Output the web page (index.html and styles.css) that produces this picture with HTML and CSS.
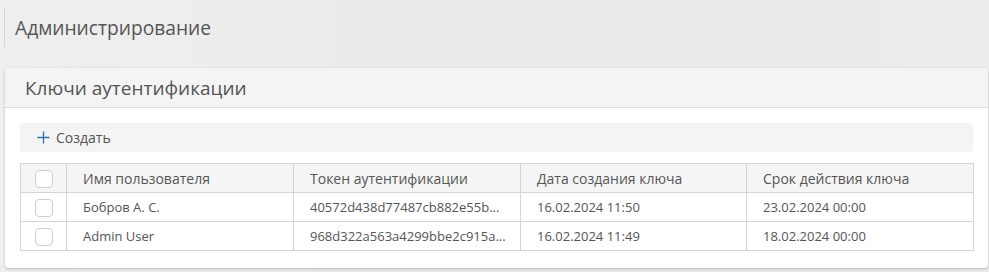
FILE: index.html
```html
<!DOCTYPE html>
<html lang="ru">
<head>
<meta charset="utf-8">
<title>Администрирование</title>
<link rel="stylesheet" href="styles.css">
</head>
<body>
<div class="page">
  <div class="page-header">
    <h1 class="page-title">Администрирование</h1>
  </div>
  <section class="card">
    <div class="card-header">
      <h2 class="card-title">Ключи аутентификации</h2>
    </div>
    <div class="card-body">
      <div class="toolbar">
        <button class="btn-create" type="button">
          <svg class="plus" width="13" height="13" viewBox="0 0 13 13"><path d="M6.5 0.5v12M0.5 6.5h12" stroke="#2f6fae" stroke-width="1.3" fill="none"/></svg>
          <span>Создать</span>
        </button>
      </div>
      <table class="grid">
        <colgroup>
          <col class="c-check"><col class="c-name"><col class="c-token"><col class="c-date"><col class="c-exp">
        </colgroup>
        <thead>
          <tr>
            <th class="check-cell"><span class="checkbox"></span></th>
            <th>Имя пользователя</th>
            <th>Токен аутентификации</th>
            <th>Дата создания ключа</th>
            <th>Срок действия ключа</th>
          </tr>
        </thead>
        <tbody>
          <tr>
            <td class="check-cell"><span class="checkbox"></span></td>
            <td>Бобров А. С.</td>
            <td>40572d438d77487cb882e55b...</td>
            <td>16.02.2024 11:50</td>
            <td>23.02.2024 00:00</td>
          </tr>
          <tr>
            <td class="check-cell"><span class="checkbox"></span></td>
            <td>Admin User</td>
            <td>968d322a563a4299bbe2c915a...</td>
            <td>16.02.2024 11:49</td>
            <td>18.02.2024 00:00</td>
          </tr>
        </tbody>
      </table>
    </div>
  </section>
</div>
</body>
</html>
```
FILE: styles.css
```css
* { box-sizing: border-box; }
html, body {
  margin: 0;
  padding: 0;
}
body {
  font-family: "Open Sans", "Noto Sans", sans-serif;
  color: #555;
  background: linear-gradient(90deg, #efefef 0%, #eaeaea 50%, #ececec 100%);
  height: 272px;
  overflow: hidden;
}
.page {
  padding: 8px 1px 0 5px;
}
.page-header {
  border-left: 1px solid #d6d6d6;
  margin-left: -1px;
  height: 39px;
  display: flex;
  align-items: center;
  padding-left: 10px;
}
.page-title {
  margin: 0;
  font-size: 19.2px;
  font-weight: 400;
  color: #555;
}
.card {
  margin-top: 21px;
  background: #fff;
  border-radius: 4px;
  box-shadow: 0 1px 3px rgba(0,0,0,0.22);
  overflow: hidden;
}
.card-header {
  height: 40px;
  background: #f4f4f4;
  border-bottom: 1px solid #dcdcdc;
  display: flex;
  align-items: center;
  padding-left: 20px;
}
.card-title {
  margin: 0;
  font-size: 19px;
  font-weight: 400;
  color: #555;
}
.card-body {
  padding: 15px 15px 17px;
}
.toolbar {
  height: 29px;
  background: #f4f4f4;
  border-radius: 4px;
  display: flex;
  align-items: center;
  padding-left: 17px;
}
.btn-create {
  display: flex;
  align-items: center;
  gap: 6px;
  border: 0;
  background: none;
  padding: 0;
  font: inherit;
  font-size: 14px;
  color: #555;
}
.plus { display: block; }
.grid {
  margin-top: 11px;
  width: 100%;
  border-collapse: collapse;
  table-layout: fixed;
  font-size: 13px;
}
.c-check { width: 46px; }
.c-name { width: 227px; }
.c-token { width: 227px; }
.c-date { width: 226px; }
.c-exp { width: 227px; }
.grid th, .grid td {
  border: 1px solid #d4d4d4;
  height: 29px;
  padding: 0 0 0 16px;
  text-align: left;
  font-weight: 400;
  color: #555;
  white-space: nowrap;
  overflow: hidden;
}
.grid thead th {
  background: #f5f5f5;
  font-size: 14px;
}
.grid .check-cell {
  padding: 0;
  text-align: center;
}
.checkbox {
  display: inline-block;
  width: 18px;
  height: 18px;
  border: 1px solid #cfcfcf;
  border-radius: 4px;
  background: #fff;
  vertical-align: middle;
}
```
